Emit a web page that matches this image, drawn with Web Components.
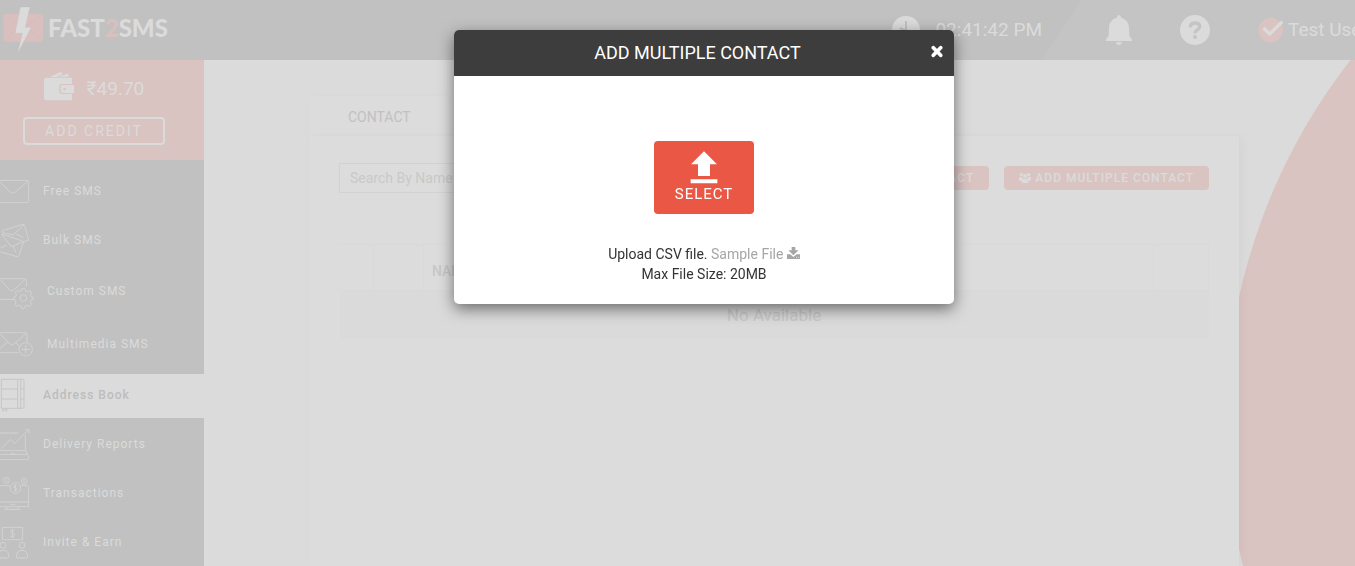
<!DOCTYPE html>
<html lang="en">
<head>
<meta charset="utf-8">
<title>Fast2SMS - Address Book</title>
<style>
:root{--page:#dbdbdb;--chrome:#c1c1c1;--accent:#d9c4c2;--light:#dbdbdb;--muted:#c1c1c1}
html,body{height:100%}
body{margin:0;background:var(--page);font-family:Roboto,"Liberation Sans",sans-serif;font-size:14px;line-height:20px;overflow:hidden}
</style>
</head>
<body>
<sms-app></sms-app>
<script>
// Each entry: width, height, viewBox, line icon (drawn in currentColor) or filled, shapes
const ICONS = {
  logo: [41, 49, '9 18 123 147', false, '<rect x="10" y="42" width="119" height="83" rx="7" fill="#dabfbf"/><path d="M12 46l57 38 57-38M12 122l40-35M127 122l-40-35" fill="none" stroke="#d4b9b9" stroke-width="2"/><path d="M61 21h29L76 82h18L52 162l15-62H45z" fill="#dbdbdb" stroke="#c9b9b9" stroke-width="1"/>'],
  clock: [28, 28, '0 0 84 84', false, '<circle cx="42" cy="42" r="42" fill="#dbdbdb"/><path d="M42 15v31M43 46L24 36" stroke="#c1c1c1" stroke-width="6" fill="none"/>'],
  bell: [26, 30, '741 45 78 90', false, '<path d="M780 45c4 0 6 3 6 8 14 3 23 14 24 30l1 22c0 6 8 10 8 15v3h-78v-3c0-5 8-9 8-15l1-22c1-16 10-27 24-30 0-5 2-8 6-8zM771 127h18c0 5-4 8-9 8s-9-3-9-8z" fill="#dbdbdb"/>'],
  help: [30, 30, '963 45 90 90', false, '<circle cx="1008" cy="90" r="45" fill="#dbdbdb"/><path d="M994 82c0-8 5-13 14-13s14 4 14 11c0 10-14 9-14 20" fill="none" stroke="#c4c4c4" stroke-width="10"/><circle cx="1008" cy="111" r="6" fill="#c4c4c4"/>'],
  check: [26, 26, '1197 53 78 78', false, '<circle cx="1235" cy="92" r="37" fill="#d9c4c2"/><path d="M1213 86l19 18 38-37" fill="none" stroke="#dbdbdb" stroke-width="10"/>'],
  wallet: [30, 30, '132 213 90 90', false, '<path d="M150 231l33-16 5 8-18 8zM175 230l29-9 3 9z" fill="#dbdbdb"/><path d="M138 233h78v19h-30q-8 0-8 8v14q0 8 8 8h30v19h-78q-6 0-6-6v-56q0-6 6-6z" fill="#dbdbdb"/><path d="M189 255h33v24h-33q-7 0-7-6v-12q0-6 7-6z" fill="#dbdbdb"/><circle cx="194" cy="267" r="4" fill="#d9c4c2"/>'],
  free: [30, 44, '0 15 90 132', true, '<rect x="-20" y="46" width="106" height="67" rx="4"/><path d="M0 51l31 31q7 6 14 0l40-35"/>'],
  bulk: [30, 44, '0 162 90 132', true, '<path d="M6 201q0-4 4-5l59-18q4 0 5 4l11 40q1 5-4 5l-11 4M7 203l32 7 33-30M48 207l22 10M4 207l67 22-14 43q-2 4-6 3l-51-15M6 210l28 35 36-15M20 240L2 249M40 243l7 18"/>'],
  custom: [34, 48, '0 309 102 144', true, '<path d="M0 341h74q5 0 5 6v17M0 343l30 33q5 4 10 0l37-34M0 403h42"/><circle cx="70" cy="399" r="10"/><path d="M66 371h9l2 8 5 2 8-4 5 6-4 7 2 5 6 2v6l-6 3-2 5 3 7-5 6-8-3-5 2-3 7h-7l-3-7-5-2-8 3-5-6 3-7-2-5-4-3v-7l5-2 2-5-3-7 5-6 7 4 5-2z"/>'],
  multimedia: [34, 48, '0 468 102 144', true, '<path d="M0 503h76q5 0 5 5v24M0 563h55M0 506l31 32q5 4 10 0l38-33M0 550l24-20M46 532l14 14"/><circle cx="77" cy="553" r="20"/><path d="M77 541v25M65 553h25"/>'],
  book: [30, 44, '0 27 90 132', true, '<path d="M4 43h64q4 0 4 5v77q0 5-4 5H4zM53 43v87M62 43v87M4 72h49M4 102h49M62 72h10M62 102h10M9 130v10M20 130v10M9 135h11"/>'],
  reports: [30, 44, '0 174 90 132', true, '<path d="M0 204h56M76 210v47M0 257h77l10 20q0 7-7 7H0M0 268h82M3 251l29-28 12 13 41-41M76 194h11v11M32 266h12"/>'],
  transactions: [30, 44, '0 321 90 132', true, '<circle cx="46" cy="369" r="16"/><circle cx="19" cy="346" r="9"/><circle cx="72" cy="349" r="9"/><path d="M0 362h29M63 362h19q4 0 4 5v58H0M0 411h86M20 426v7M54 426v7M12 433h50M30 418h16M51 364q-2-3-5-3-5 0-5 4 0 3 5 4t5 4q0 4-5 4-3 0-5-3M46 358v22M19 341v10M72 344v10"/>'],
  invite: [30, 44, '0 468 90 132', true, '<path d="M7 487h61v37H7zM43 499q-2-3-6-3-5 0-5 4 0 3 6 5t5 6q0 5-6 5-5 0-6-4M37 492v27M0 561q0-5 9-5 17 0 17 16v2q0 5-4 5H0M49 576q0-20 17-20t17 20q0 3-3 3H52q-3 0-3-3z"/><circle cx="9" cy="541" r="9"/><circle cx="66" cy="541" r="9"/>'],
  close: [12, 13, '0 0 36 39', false, '<path d="M7 8l22 23M29 8L7 31" stroke="#fff" stroke-width="11" stroke-linecap="round"/>'],
  upload: [28, 34, '720 392 84 102', false, '<path d="M762 393l39 39h-21v35h-36v-35h-21zM722 477h80v12h-80z" fill="#fff"/>'],
  download: [13, 12, '0 0 39 36', false, '<path d="M14 0h11v10h10L19 25 4 10h10zM0 22h10l9 8 10-8h10v14H0z" fill="#a6a6a6"/><path d="M27 31h3M33 31h3" stroke="#fff" stroke-width="2"/>'],
  user: [12, 10, '0 0 36 30', false, '<circle cx="18" cy="8" r="8" fill="#dbdbdb"/><path d="M4 30q0-13 14-13t14 13z" fill="#dbdbdb"/>'],
  users: [12, 10, '300 161 36 30', false, '<g fill="#dbdbdb"><circle cx="318" cy="170" r="6"/><circle cx="307" cy="166" r="5"/><circle cx="329" cy="166" r="5"/><path d="M300 184v-7q0-5 6-5 3 0 4 2l1 5-4 5zM336 184v-7q0-5-6-5-3 0-4 2l-1 5 4 5zM308 191v-7q0-6 5-6h10q5 0 5 6v7z"/></g>']
};

function define(name, html, setup) {
  customElements.define(name, class extends HTMLElement {
    constructor() {
      super();
      this.attachShadow({ mode: 'open' }).innerHTML = '<style>*{box-sizing:border-box}</style>' + html;
    }
    connectedCallback() { if (setup) setup(this, this.shadowRoot); }
  });
}

define('sms-icon', '<style>:host{display:inline-flex;flex:none}svg{display:block}</style><div></div>', (el, root) => {
  const [w, h, box, line, body] = ICONS[el.getAttribute('name')];
  root.querySelector('div').innerHTML =
    `<svg width="${w}" height="${h}" viewBox="${box}" fill="none" stroke-width="3" ${line ? 'stroke="currentColor"' : ''} aria-hidden="true">${body}</svg>`;
});

define('sms-header', `
<style>
:host{display:flex;align-items:center;height:60px;padding-left:3px;color:var(--light);font-size:19px;background:var(--chrome)}
.logo{display:flex;align-items:center;gap:4px;color:var(--light);text-decoration:none;font:900 24px/32px Lato,sans-serif;flex:1}
.logo b{font-weight:900;color:#dabfbf}
.logo span{padding-bottom:4px}
.time{display:flex;align-items:center;gap:15px}
.tools{display:flex;align-items:center;gap:48px;height:60px;padding-left:64px;background:#c4c4c4;clip-path:polygon(40px 0,100% 0,100% 100%,0 100%)}
button{display:flex;border:0;padding:0;background:none}
.user{display:flex;align-items:center;gap:4px;width:97px;white-space:nowrap;color:inherit;text-decoration:none}
</style>
<a class="logo" href="#" aria-label="Fast2SMS"><sms-icon name="logo"></sms-icon><span>FAST<b>2</b>SMS</span></a>
<div class="time"><sms-icon name="clock"></sms-icon><time>02:41:42 PM</time></div>
<div class="tools">
<button aria-label="Notifications"><sms-icon name="bell"></sms-icon></button>
<button aria-label="Help"><sms-icon name="help"></sms-icon></button>
<a class="user" href="#"><sms-icon name="check"></sms-icon><span>Test User</span></a>
</div>`);

define('sms-credit', `
<style>
:host{display:flex;flex-direction:column;align-items:center;gap:16px;height:100px;padding:11px 16px 0 0;background:var(--accent);color:var(--light)}
.sum{display:flex;gap:13px;font-size:19px;line-height:36px;height:30px}
button{width:142px;height:28px;border:2px solid var(--light);border-radius:4px;background:none;color:inherit;padding:0;font:14px/20px Roboto,sans-serif;letter-spacing:2px}
</style>
<div class="sum"><sms-icon name="wallet"></sms-icon><span>₹49.70</span></div>
<button>ADD CREDIT</button>`);

define('sms-nav-item', `
<style>
:host{display:block;color:var(--light)}
:host([active]){background:var(--page);color:#bdbdbd;font-weight:500}
a{display:flex;gap:13px;color:inherit;text-decoration:none;font-size:12px;letter-spacing:1px;line-height:42px}
.icon{display:flex;opacity:.7}
:host([large]) a{line-height:46px}
</style>
<a href="#"><span class="icon"></span><span><slot></slot></span></a>`, (el, root) => {
  root.querySelector('.icon').innerHTML = `<sms-icon name="${el.getAttribute('icon')}"></sms-icon>`;
});

define('sms-sidebar', `
<style>
:host{display:block;width:204px;flex:none;background:var(--chrome)}
nav{display:flex;flex-direction:column;gap:5px;padding-top:10px}
</style>
<sms-credit></sms-credit><nav></nav>`, (el, root) => {
  root.querySelector('nav').innerHTML = [
    ['free', 'Free SMS'], ['bulk', 'Bulk SMS'], ['custom', 'Custom SMS', 'large'], ['multimedia', 'Multimedia SMS', 'large'],
    ['book', 'Address Book', 'active'], ['reports', 'Delivery Reports'], ['transactions', 'Transactions'], ['invite', 'Invite &amp; Earn']
  ].map(([icon, label, flag = '']) => `<sms-nav-item icon="${icon}" ${flag}>${label}</sms-nav-item>`).join('');
});

define('sms-button', `
<style>
:host{display:inline-flex}
button{display:flex;align-items:center;gap:4px;height:24px;border:0;border-radius:4px;padding:0 15px;background:var(--accent);color:var(--light);font:500 12px/16px Roboto,sans-serif;letter-spacing:1px}
</style>
<button><slot name="icon"></slot><slot></slot></button>`);

define('sms-contacts', `
<style>
:host{display:flex;flex-direction:column;flex:1;min-height:0}
.tab{width:140px;height:40px;padding:11px 0 0 39px;color:var(--muted);background:#dcdcdc;border-radius:4px 4px 0 0;box-shadow:0 0 6px rgba(0,0,0,.02)}
.panel{flex:1;background:#dcdcdc;padding:27px 30px;box-shadow:6px 0 10px rgba(0,0,0,.02),0 0 6px rgba(0,0,0,.02)}
.bar{display:flex;align-items:center;gap:15px;margin-bottom:51px}
input{width:240px;height:30px;margin-right:auto;border:1px solid #d2d2d2;padding:0 10px;background:none;font:14px/20px Roboto,sans-serif}
input::placeholder{color:#c9c9c9;opacity:1}
table{width:100%;border-collapse:collapse;table-layout:fixed}
th{height:46px;border:1px solid #d9d9d9;padding:6px 8px 0;text-align:left;font-weight:500;color:#c8c8c8}
th:first-child{border-left-color:transparent}
td{height:48px;padding:0;text-align:center;background:#dadada;color:#c8c8c8;font-size:17px}
</style>
<div class="tab">CONTACT</div>
<section class="panel">
<div class="bar">
<input type="search" placeholder="Search By Name" aria-label="Search By Name">
<sms-button><sms-icon slot="icon" name="user"></sms-icon>ADD CONTACT</sms-button>
<sms-button><sms-icon slot="icon" name="users"></sms-icon>ADD MULTIPLE CONTACT</sms-button>
</div>
<table>
<colgroup><col style="width:34px"><col style="width:50px"><col><col style="width:55px"></colgroup>
<thead><tr><th></th><th></th><th>NAME</th><th></th></tr></thead>
<tbody><tr><td colspan="4">No Available</td></tr></tbody>
</table>
</section>`);

define('sms-upload-dialog', `
<style>
:host{display:flex;justify-content:center;align-items:flex-start;position:fixed;inset:0;padding:30px 0 0 53px}
.box{width:500px;max-width:100%;border-radius:5px;background:#fff;color:#333;box-shadow:0 5px 15px rgba(0,0,0,.5);text-align:center}
header{display:grid;grid-template-columns:30px 1fr 43px;align-items:center;height:46px;background:#3d3d3d;color:#fff;border-radius:5px 5px 0 0}
h2{grid-column:2;margin:0;font-size:18px;line-height:24px;font-weight:400}
.close{display:flex;border:0;padding:0 0 4px 20px;background:none}
.body{padding:65px 20px 20px}
.select{display:flex;flex-direction:column;align-items:center;width:100px;height:73px;margin:0 auto 30px;border:0;border-radius:4px;padding:10px 0 0;background:#ea5744;color:#fff;font:15px/18px Roboto,sans-serif;letter-spacing:1px}
p{margin:0}
a{color:#a6a6a6;text-decoration:none}
</style>
<div class="box" role="dialog" aria-labelledby="title">
<header><h2 id="title">ADD MULTIPLE CONTACT</h2><button class="close" aria-label="Close"><sms-icon name="close"></sms-icon></button></header>
<div class="body">
<button class="select"><sms-icon name="upload"></sms-icon>SELECT</button>
<p>Upload CSV file. <a href="#">Sample File <sms-icon name="download"></sms-icon></a></p>
<p>Max File Size: 20MB</p>
</div>
</div>`);

define('sms-app', `
<style>
:host{display:flex;flex-direction:column;height:100vh;overflow:hidden}
.row{display:flex;flex:1;min-height:0}
main{display:flex;flex:1;min-width:0;padding:36px 116px 0 105px;background:radial-gradient(circle at calc(100% + 460px) 363px,var(--accent) 589px,transparent 590px)}
</style>
<sms-header></sms-header>
<div class="row"><sms-sidebar></sms-sidebar><main><sms-contacts></sms-contacts></main></div>
<sms-upload-dialog></sms-upload-dialog>`);
</script>
</body>
</html>
